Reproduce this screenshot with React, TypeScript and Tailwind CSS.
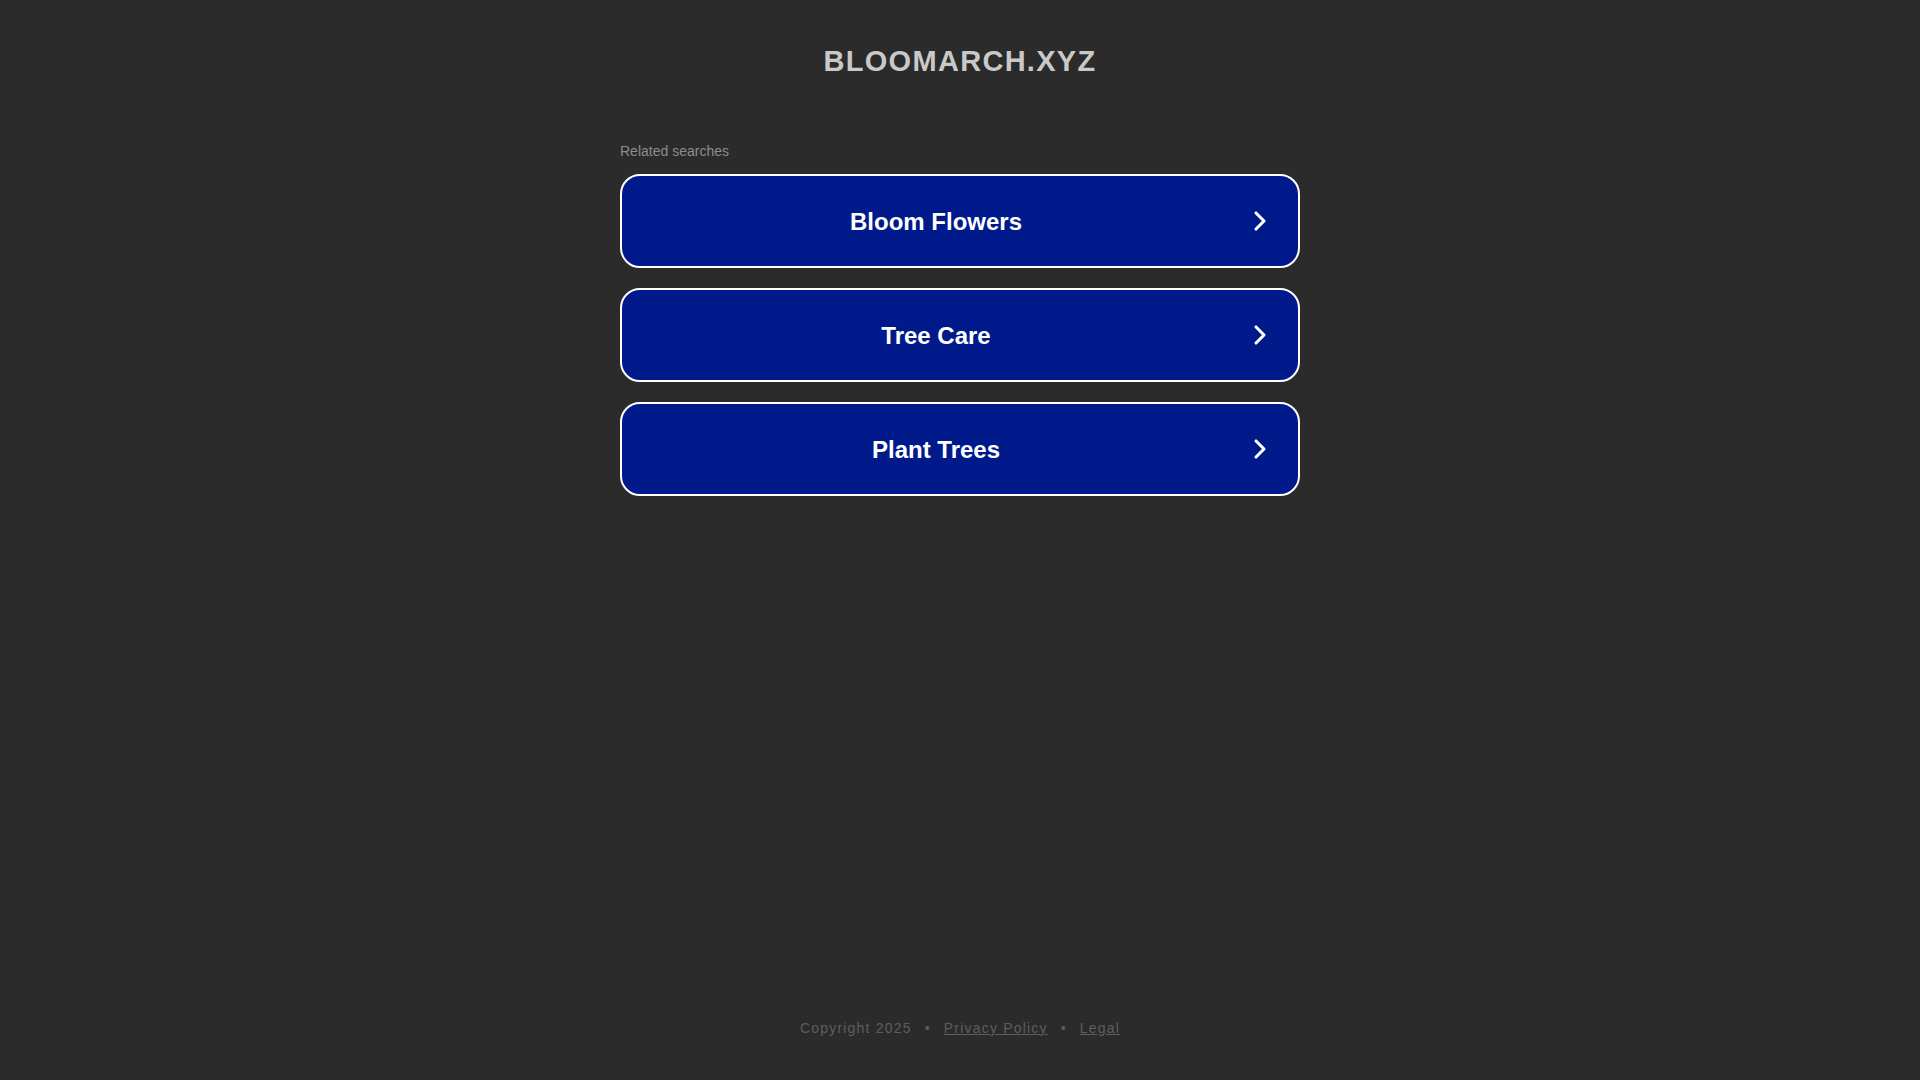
import { ChevronRight } from 'lucide-react';

const searches = ['Bloom Flowers', 'Tree Care', 'Plant Trees'];

const SearchLink = ({ label }: { label: string }) => {
  return (
    <a
      href="#"
      className="flex h-[94px] items-center rounded-[20px] border-2 border-white bg-[#011a8b] px-[14px] text-white"
    >
      <span className="flex-1 pt-[2px] text-center text-[24px] font-bold leading-[30px]">{label}</span>
      <span className="flex w-[48px] items-center justify-center">
        <ChevronRight size={32} strokeWidth={2.3} />
      </span>
    </a>
  );
};

export default function App() {
  return (
    <div
      className="flex min-h-screen flex-col bg-[#2b2b2b]"
      style={{ fontFamily: '"Liberation Sans", Arial, sans-serif' }}
    >
      {/* Header */}
      <div className="pt-[43px] text-center">
        <h1 className="text-[29px] font-bold leading-[36px] tracking-[1.3px] text-[#c9c9c9]">
          BLOOMARCH.XYZ
        </h1>
      </div>

      {/* Related searches */}
      <div className="mx-auto mt-[62px] w-[680px]">
        <div className="text-[14px] leading-[20px] text-[#8c8c8c]">Related searches</div>
        <div className="mt-[13px] flex flex-col gap-[20px]">
          {searches.map((s) => (
            <SearchLink key={s} label={s} />
          ))}
        </div>
      </div>

      {/* Footer */}
      <div className="mt-auto pb-[42px] text-center text-[14px] leading-[20px] tracking-[1.2px] text-[#5e5e5e]">
        <span>Copyright 2025</span>
        <span className="mx-[13px]">•</span>
        <a href="#" className="underline">
          Privacy Policy
        </a>
        <span className="mx-[13px]">•</span>
        <a href="#" className="underline">
          Legal
        </a>
      </div>
    </div>
  );
}
